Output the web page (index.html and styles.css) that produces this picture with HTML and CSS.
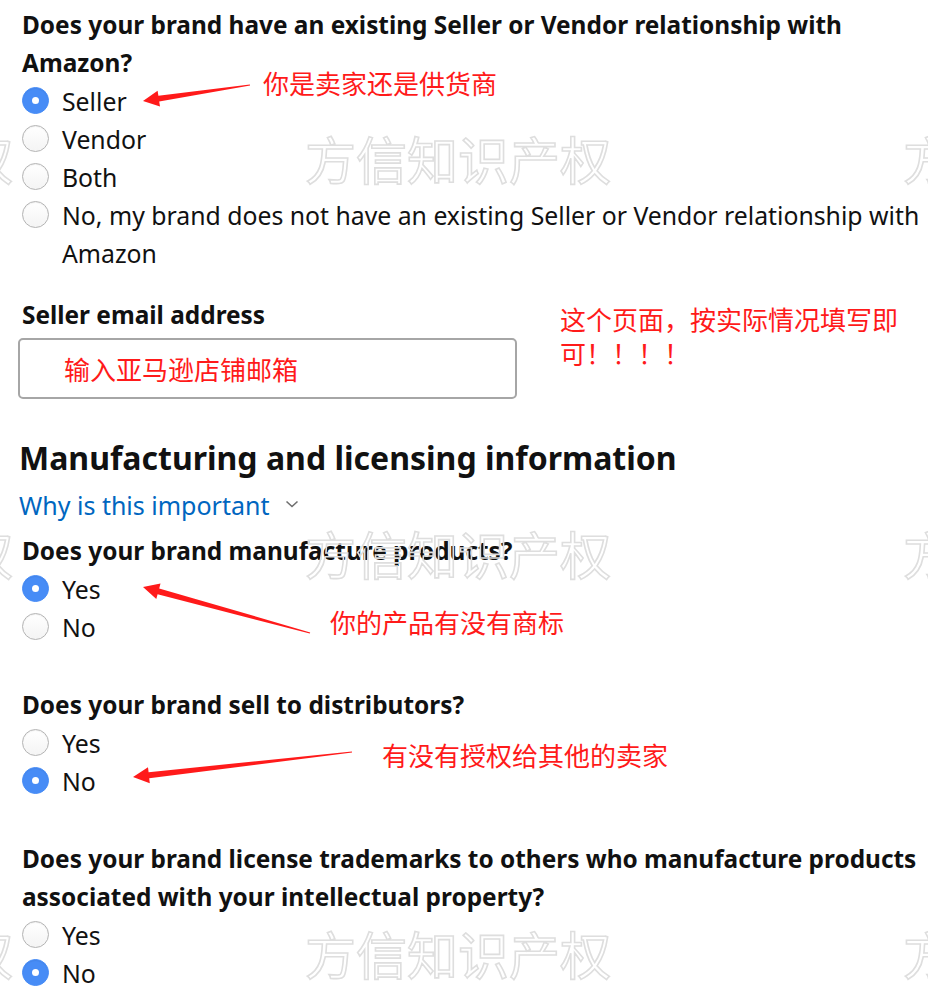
FILE: index.html
```html
<!DOCTYPE html>
<html>
<head>
    <title>Brand Registry</title>
    <link rel="stylesheet" href="styles.css">
</head>
<body>
    <div class="page">
        <div class="question">
            <p class="q-title">Does your brand have an existing Seller or Vendor relationship with Amazon?</p>
            <div class="option"><span class="radio checked"></span><span class="option-text">Seller</span></div>
            <div class="option"><span class="radio"></span><span class="option-text">Vendor</span></div>
            <div class="option"><span class="radio"></span><span class="option-text">Both</span></div>
            <div class="option"><span class="radio"></span><span class="option-text">No, my brand does not have an existing Seller or Vendor relationship with Amazon</span></div>
        </div>

        <div class="field">
            <p class="q-title">Seller email address</p>
            <div class="text-input"><span class="input-note">输入亚马逊店铺邮箱</span></div>
        </div>

        <h2 class="section-title">Manufacturing and licensing information</h2>
        <div class="why-link">Why is this important
            <svg class="chevron" width="14" height="10" viewBox="0 0 14 10"><path d="M1.5 2.5 L7 7.5 L12.5 2.5" fill="none" stroke="#6f6f6f" stroke-width="1.6"/></svg>
        </div>

        <div class="question tight">
            <p class="q-title">Does your brand manufacture products?</p>
            <div class="option"><span class="radio checked"></span><span class="option-text">Yes</span></div>
            <div class="option"><span class="radio"></span><span class="option-text">No</span></div>
        </div>

        <div class="question spaced">
            <p class="q-title">Does your brand sell to distributors?</p>
            <div class="option"><span class="radio"></span><span class="option-text">Yes</span></div>
            <div class="option"><span class="radio checked"></span><span class="option-text">No</span></div>
        </div>

        <div class="question spaced">
            <p class="q-title">Does your brand license trademarks to others who manufacture products associated with your intellectual property?</p>
            <div class="option"><span class="radio"></span><span class="option-text">Yes</span></div>
            <div class="option"><span class="radio checked"></span><span class="option-text">No</span></div>
        </div>
    </div>

    <!-- annotations drawn over the screenshot -->
    <div class="watermark" style="left:-293px;top:128px">方信知识产权</div>
    <div class="watermark" style="left:305px;top:128px">方信知识产权</div>
    <div class="watermark" style="left:903px;top:128px">方信知识产权</div>
    <div class="watermark" style="left:-293px;top:523px">方信知识产权</div>
    <div class="watermark" style="left:305px;top:523px">方信知识产权</div>
    <div class="watermark" style="left:903px;top:523px">方信知识产权</div>
    <div class="watermark" style="left:-293px;top:923px">方信知识产权</div>
    <div class="watermark" style="left:305px;top:923px">方信知识产权</div>
    <div class="watermark" style="left:903px;top:923px">方信知识产权</div>

    <svg class="arrows" width="928" height="996" viewBox="0 0 928 996">
        <polygon points="249.9,84.5 158.4,95.7 157.6,90.7 143,101 160.0,106.5 159.2,101.6 250.1,85.5" fill="#ff1a1a"/>
        <polygon points="310.2,632.4 159.2,588.4 160.5,583.6 143,587 156.3,599.0 157.6,594.2 309.8,633.6" fill="#ff1a1a"/>
        <polygon points="351.9,751.4 148.6,772.2 148.0,767.2 133,777 149.8,783.2 149.2,778.2 352.1,752.6" fill="#ff1a1a"/>
    </svg>

    <div class="note" style="left:263px;top:66px">你是卖家还是供货商</div>
    <div class="note" style="left:560px;top:302px">这个页面，按实际情况填写即<br>可！！！！</div>
    <div class="note" style="left:330px;top:605px">你的产品有没有商标</div>
    <div class="note" style="left:382px;top:738px">有没有授权给其他的卖家</div>
</body>
</html>
```

FILE: styles.css
```css
body {
    margin: 0;
    background-color: #ffffff;
    font-family: "Noto Sans", "Open Sans", sans-serif;
    color: #111111;
    overflow: hidden;
}

.page {
    position: relative;
    width: 928px;
    height: 996px;
    padding-top: 6px;
    box-sizing: border-box;
}

p {
    margin: 0;
}

.question,
.field {
    padding-left: 22px;
}

.q-title {
    font-size: 24.4px;
    font-weight: 700;
    line-height: 38px;
}

.option {
    display: flex;
    align-items: flex-start;
    font-size: 24.8px;
    line-height: 38px;
}

.radio {
    flex: none;
    width: 27px;
    height: 27px;
    margin-top: 5px;
    margin-right: 13px;
    border-radius: 50%;
    border: 1px solid #b4b4b4;
    box-sizing: border-box;
    background: linear-gradient(#ffffff, #f4f4f4);
    box-shadow: inset 0 1px 1px rgba(0, 0, 0, 0.06);
    position: relative;
}

.radio.checked {
    border-color: #478cf6;
    background: #478cf6;
}

.radio.checked::after {
    content: "";
    position: absolute;
    left: 9px;
    top: 9px;
    width: 7px;
    height: 7px;
    border-radius: 50%;
    background: #ffffff;
}

.field {
    margin-top: 24px;
}

.text-input {
    width: 499px;
    height: 61px;
    margin-top: 4px;
    margin-left: -4px;
    border: 2px solid #a6a6a6;
    border-radius: 5px;
    box-sizing: border-box;
    display: flex;
    align-items: center;
    padding-left: 44px;
}

.input-note {
    font-family: "Noto Sans CJK SC", sans-serif;
    font-size: 26px;
    color: #ff1a1a;
}

.section-title {
    margin: 37px 0 0 19px;
    font-size: 32px;
    font-weight: 700;
    line-height: 44px;
}

.why-link {
    margin: 6px 0 0 19px;
    font-size: 25px;
    line-height: 38px;
    color: #0066c0;
    display: flex;
    align-items: center;
}

.chevron {
    margin-left: 16px;
    margin-top: -2px;
}

.question.tight {
    margin-top: 8px;
}

.question.spaced {
    margin-top: 40px;
}

.watermark {
    position: absolute;
    font-family: "Noto Sans CJK SC", sans-serif;
    font-size: 51px;
    line-height: 60px;
    color: transparent;
    -webkit-text-stroke: 1.6px #dedede;
    white-space: nowrap;
    pointer-events: none;
}

.arrows {
    position: absolute;
    left: 0;
    top: 0;
    pointer-events: none;
}

.note {
    position: absolute;
    font-family: "Noto Sans CJK SC", sans-serif;
    font-size: 26px;
    line-height: 34px;
    color: #ff1a1a;
    white-space: nowrap;
}
```
